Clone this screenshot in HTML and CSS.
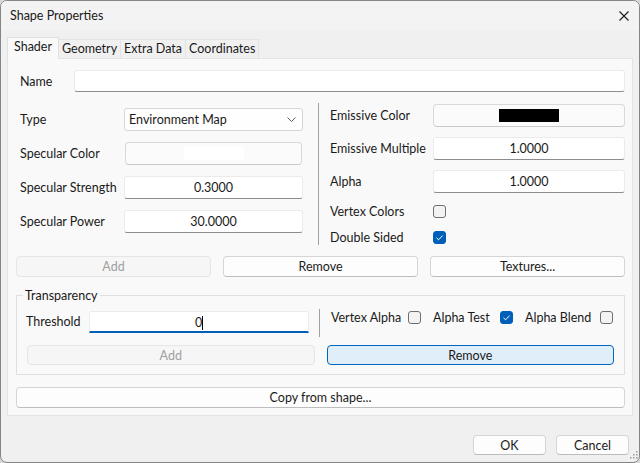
FILE: index.html
```html
<!DOCTYPE html>
<html lang="en">
<head>
    <meta charset="UTF-8">
    <meta name="viewport" content="width=device-width, initial-scale=1.0">
    <title>Shape Properties</title>
    <link rel="stylesheet" href="styles.css">
</head>
<body>
<div class="window">
    <div class="titlebar">
        <span class="title">Shape Properties</span>
        <span class="close">
            <svg width="10" height="10" viewBox="0 0 10 10"><path d="M0.5 0.5 L9.5 9.5 M9.5 0.5 L0.5 9.5" stroke="#1a1a1a" stroke-width="1.1" fill="none"/></svg>
        </span>
    </div>

    <div class="main">
        <div class="tabs">
            <div class="tab active">Shader</div>
            <div class="tab">Geometry</div>
            <div class="tab">Extra Data</div>
            <div class="tab">Coordinates</div>
        </div>

        <div class="panel">
            <div class="name-row">
                <label class="name-label">Name</label>
                <div class="field"></div>
            </div>

            <div class="columns">
                <div class="col col-left">
                    <div class="row">
                        <label class="lbl">Type</label>
                        <div class="combo">
                            <span>Environment Map</span>
                            <svg width="9" height="5" viewBox="0 0 9 5"><path d="M0.5 0.5 L4.5 4.5 L8.5 0.5" stroke="#5d5d5d" stroke-width="1" fill="none"/></svg>
                        </div>
                    </div>
                    <div class="row">
                        <label class="lbl">Specular Color</label>
                        <div class="swatch-btn inset"><span class="swatch white"></span></div>
                    </div>
                    <div class="row">
                        <label class="lbl">Specular Strength</label>
                        <div class="field num">0.3000</div>
                    </div>
                    <div class="row">
                        <label class="lbl">Specular Power</label>
                        <div class="field num">30.0000</div>
                    </div>
                </div>

                <div class="vsep"></div>

                <div class="col col-right">
                    <div class="row">
                        <label class="lbl">Emissive Color</label>
                        <div class="swatch-btn"><span class="swatch black"></span></div>
                    </div>
                    <div class="row">
                        <label class="lbl">Emissive Multiple</label>
                        <div class="field num">1.0000</div>
                    </div>
                    <div class="row">
                        <label class="lbl">Alpha</label>
                        <div class="field num">1.0000</div>
                    </div>
                    <div class="row check-row">
                        <label class="lbl">Vertex Colors</label>
                        <span class="check"></span>
                    </div>
                    <div class="row check-row">
                        <label class="lbl">Double Sided</label>
                        <span class="check checked">
                            <svg width="13" height="13" viewBox="0 0 13 13"><path d="M3.5 6.8 L5.6 8.8 L9.6 4.6" stroke="#fff" stroke-width="1" fill="none"/></svg>
                        </span>
                    </div>
                </div>
            </div>

            <div class="btn-row">
                <button class="btn" disabled>Add</button>
                <button class="btn">Remove</button>
                <button class="btn">Textures...</button>
            </div>

            <div class="group">
                <div class="group-title">Transparency</div>
                <div class="group-row">
                    <label class="thr-label">Threshold</label>
                    <div class="field num focused">0<span class="caret"></span></div>
                    <div class="vsep short"></div>
                    <span class="opt opt-vertex">Vertex Alpha</span>
                    <span class="check"></span>
                    <span class="opt opt-test">Alpha Test</span>
                    <span class="check checked">
                        <svg width="13" height="13" viewBox="0 0 13 13"><path d="M3.5 6.8 L5.6 8.8 L9.6 4.6" stroke="#fff" stroke-width="1" fill="none"/></svg>
                    </span>
                    <span class="opt opt-blend">Alpha Blend</span>
                    <span class="check"></span>
                </div>
                <div class="btn-row two">
                    <button class="btn" disabled>Add</button>
                    <button class="btn default">Remove</button>
                </div>
            </div>

            <button class="btn wide">Copy from shape...</button>
        </div>

        <div class="footer">
            <button class="btn dlg">OK</button>
            <button class="btn dlg">Cancel</button>
        </div>
    </div>

    <svg class="grip" width="10" height="10" viewBox="0 0 10 10">
        <rect x="8" y="0" width="1.5" height="1.5" fill="#9a9a9a"/>
        <rect x="5" y="3" width="1.5" height="1.5" fill="#9a9a9a"/>
        <rect x="8" y="3" width="1.5" height="1.5" fill="#9a9a9a"/>
        <rect x="2" y="6" width="1.5" height="1.5" fill="#9a9a9a"/>
        <rect x="5" y="6" width="1.5" height="1.5" fill="#9a9a9a"/>
        <rect x="8" y="6" width="1.5" height="1.5" fill="#9a9a9a"/>
    </svg>
</div>
</body>
</html>
```

FILE: styles.css
```css
body {
    margin: 0;
    background: #d8d8d8;
    font-family: Lato, "Segoe UI", sans-serif;
    font-size: 12.5px;
    color: #1a1a1a;
}

.window {
    position: relative;
    width: 640px;
    height: 463px;
    box-sizing: border-box;
    border: 1px solid #858585;
    border-radius: 7px;
    background: #f0f0f0;
    overflow: hidden;
    display: flex;
    flex-direction: column;
}

.titlebar {
    height: 29px;
    background: #f3f3f3;
    display: flex;
    align-items: center;
    padding-left: 9px;
}

.close {
    margin-left: auto;
    margin-right: 10px;
    display: flex;
}

.main {
    flex: 1;
    padding: 7px 6px 0;
    display: flex;
    flex-direction: column;
}

/* tabs */
.tabs {
    display: flex;
    align-items: flex-end;
    height: 21px;
}

.tab {
    box-sizing: border-box;
    height: 19px;
    line-height: 17px;
    padding: 0 3px;
    border: 1px solid #e3e3e3;
    border-bottom: none;
    margin-left: -1px;
    background: #f0f0f0;
}

.tab.active {
    position: relative;
    z-index: 1;
    height: 22px;
    margin-bottom: -1px;
    margin-left: 0;
    padding: 0 6px;
    line-height: 18px;
    background: #f9f9f9;
    border-color: #e0e0e0;
}

.panel {
    background: #f9f9f9;
    border: 1px solid #e3e3e3;
    padding: 11px 7px 7px 8px;
    display: flex;
    flex-direction: column;
}

/* fields */
.field {
    box-sizing: border-box;
    height: 23px;
    line-height: 21px;
    background: #fff;
    border: 1px solid #ebebeb;
    border-bottom-color: #8c8c8c;
    border-radius: 3px;
}

.field.num {
    text-align: center;
}

.field.focused {
    border-bottom: 2px solid #005fb8;
    border-radius: 3px 3px 0 0;
}

.caret {
    display: inline-block;
    width: 1px;
    height: 14px;
    background: #000;
    vertical-align: -3px;
}

.name-row {
    display: flex;
    align-items: center;
}

.name-label {
    width: 58px;
    box-sizing: border-box;
    padding-left: 4px;
}

.name-row .field {
    flex: 1;
    height: 22px;
}

.columns {
    display: flex;
    margin-top: 11px;
}

.col {
    display: flex;
    flex-direction: column;
}

.col-left {
    width: 287px;
    padding-top: 5px;
    gap: 11px;
}

.col-right {
    flex: 1;
    padding-top: 1px;
    margin-left: 11px;
    gap: 10px;
}

.row {
    display: flex;
    align-items: center;
}

.row .field,
.row .combo,
.row .swatch-btn {
    flex: 1;
}

.col-left .lbl {
    width: 108px;
    box-sizing: border-box;
    padding-left: 4px;
}

.col-right .lbl {
    width: 103px;
}

.check-row {
    height: 16px;
}

.vsep {
    width: 1px;
    background: #a0a0a0;
    margin-left: 15px;
}

.combo {
    box-sizing: border-box;
    height: 23px;
    display: flex;
    align-items: center;
    justify-content: space-between;
    padding: 0 6px 0 4px;
    background: #fefefe;
    border: 1px solid #d6d6d6;
    border-radius: 3px;
}

.swatch-btn {
    box-sizing: border-box;
    height: 23px;
    display: flex;
    align-items: center;
    justify-content: center;
    background: #fbfbfb;
    border: 1px solid #d9d9d9;
    border-bottom-color: #c8c8c8;
    border-radius: 4px;
}

.swatch-btn.inset {
    margin: 0 1px;
}

.swatch {
    width: 60px;
    height: 13px;
}

.swatch.black {
    background: #000;
}

.swatch.white {
    background: #fff;
}

.check {
    box-sizing: border-box;
    width: 13px;
    height: 13px;
    border: 1px solid #6f6f6f;
    border-radius: 3px;
    background: #f3f3f3;
    display: flex;
}

.check.checked {
    background: #005fb8;
    border-color: #005fb8;
}

.check.checked svg {
    margin: -1px;
}

/* buttons */
.btn {
    box-sizing: border-box;
    height: 21px;
    padding: 0;
    font: inherit;
    color: #1a1a1a;
    background: #fdfdfd;
    border: 1px solid #d5d5d5;
    border-bottom-color: #bdbdbd;
    border-radius: 4px;
}

.btn:disabled {
    background: #f6f6f6;
    border-color: #e6e6e6;
    color: #a0a0a0;
}

.btn.default {
    background: #e0eef9;
    border-color: #0067c0;
}

.btn-row {
    display: grid;
    grid-template-columns: 1fr 1fr 1fr;
    column-gap: 12px;
    margin-top: 11px;
}

.btn-row.two {
    grid-template-columns: 1fr 1fr;
    margin-top: 12px;
}

.btn-row.two .btn {
    height: 20px;
}

/* transparency group */
.group {
    margin-top: 18px;
    border: 1px solid #e0e0e0;
    padding: 0 10px 9px;
}

.group-title {
    display: table;
    margin: -8px 0 0 -4px;
    padding: 0 2px;
    line-height: 16px;
    background: #f9f9f9;
}

.group-row {
    display: flex;
    align-items: flex-start;
    margin-top: 7px;
}

.thr-label {
    width: 63px;
    margin-left: -1px;
    line-height: 22px;
}

.group-row .field {
    width: 220px;
    height: 22px;
}

.vsep.short {
    height: 28px;
    margin: -2px 11px -4px 10px;
}

.opt {
    line-height: 14px;
}

.opt-vertex {
    width: 77px;
}

.opt-test {
    width: 67px;
    margin-left: 12px;
}

.opt-blend {
    width: 75px;
    margin-left: 12px;
}

.btn.wide {
    margin-top: 12px;
}

.footer {
    display: flex;
    justify-content: flex-end;
    gap: 10px;
    padding: 19px 4px 0 0;
}

.btn.dlg {
    width: 73px;
    height: 20px;
}

.grip {
    position: absolute;
    right: 1px;
    bottom: 1px;
}
```
